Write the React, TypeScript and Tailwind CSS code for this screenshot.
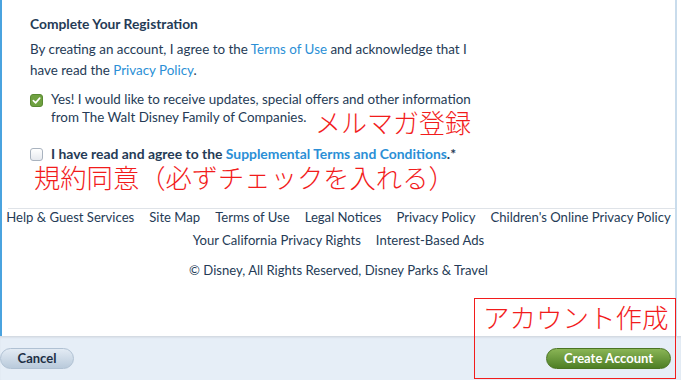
import React from "react";

const font = { fontFamily: "Lato, 'Noto Sans', sans-serif" };
const jp = { fontFamily: "'Noto Sans CJK JP', sans-serif" };

export default function App() {
  return (
    <div className="relative w-[681px] h-[380px] overflow-hidden bg-white" style={font}>
      <div className="flex flex-col h-[336px] border-l-2 border-[#4aa3df] border-r-2 border-r-[#c9dcec] mr-[4px]">
        <div className="pl-[28px] pr-4 text-[13.4px] text-[#253b56]">
          <div className="pt-[15px] font-bold text-[13.8px] leading-[18px]">Complete Your Registration</div>
          <p className="mt-[6px] leading-[21px] w-[450px]">
            By creating an account, I agree to the <span className="text-[#2b8fd6]">Terms of Use</span> and acknowledge that I have read the <span className="text-[#2b8fd6]">Privacy Policy</span>.
          </p>
          <div className="mt-[9px] flex gap-[8px]">
            <div className="mt-[4px] w-[13px] h-[13px] rounded-[3px] bg-[#6fa140] border border-[#5a8a32] flex items-center justify-center shrink-0">
              <svg width="9" height="9" viewBox="0 0 10 10"><path d="M1.5 5.2 L4 7.6 L8.6 2.4" stroke="white" strokeWidth="1.8" fill="none" strokeLinecap="round" strokeLinejoin="round" /></svg>
            </div>
            <p className="leading-[18px] w-[435px]">Yes! I would like to receive updates, special offers and other information from The Walt Disney Family of Companies.</p>
          </div>
          <div className="mt-[19px] flex gap-[8px] items-center">
            <div className="w-[13px] h-[13px] rounded-[3px] border border-[#a9b3bf] bg-gradient-to-b from-white to-[#e6e9ee] shrink-0" />
            <p className="font-bold text-[13.9px] leading-[18px]">I have read and agree to the <span className="text-[#2b8fd6]">Supplemental Terms and Conditions</span>.*</p>
          </div>
        </div>
        <div className="mt-[45px] ml-[6px] border-t border-[#dfe3e8]" />
        <div className="text-[13.1px] text-[#253b56] flex flex-col items-center">
          <div className="flex gap-[15px] leading-[16px]">
            <span>Help &amp; Guest Services</span>
            <span>Site Map</span>
            <span>Terms of Use</span>
            <span>Legal Notices</span>
            <span>Privacy Policy</span>
            <span>Children's Online Privacy Policy</span>
          </div>
          <div className="flex gap-[15px] mt-[7px] leading-[16px]">
            <span>Your California Privacy Rights</span>
            <span>Interest-Based Ads</span>
          </div>
          <div className="mt-[14px] leading-[16px]">© Disney, All Rights Reserved, Disney Parks &amp; Travel</div>
        </div>
      </div>
      <div className="h-[44px] bg-[#e6eef7] border-t border-[#d4dbe3] shadow-[inset_0_1px_2px_rgba(0,0,0,0.06)] flex items-center justify-between pr-[10px]">
        <button className="ml-0 w-[74px] h-[21px] rounded-full bg-gradient-to-b from-[#e3ebf4] to-[#b9cadb] border border-[#b0c1d3] text-[13px] font-bold text-[#1e2f45] flex items-center justify-center">Cancel</button>
        <button className="w-[125px] h-[21px] rounded-full bg-gradient-to-b from-[#8ab555] to-[#4e7f25] border border-[#4a7423] text-[13px] font-bold text-white flex items-center justify-center">Create Account</button>
      </div>
      <div className="absolute left-[315px] top-[106px] text-[26px] leading-[32px] text-[#f21c1c] font-light" style={jp}>メルマガ登録</div>
      <div className="absolute left-[34px] top-[160px] text-[26.3px] leading-[34px] text-[#f21c1c] font-light" style={jp}>規約同意（必ずチェックを入れる）</div>
      <div className="absolute left-[474px] top-[298px] w-[202px] h-[81px] border border-[#f21c1c]">
        <div className="pl-[8px] pt-[1px] text-[26.5px] leading-[34px] text-[#f21c1c] font-light" style={jp}>アカウント作成</div>
      </div>
    </div>
  );
}
